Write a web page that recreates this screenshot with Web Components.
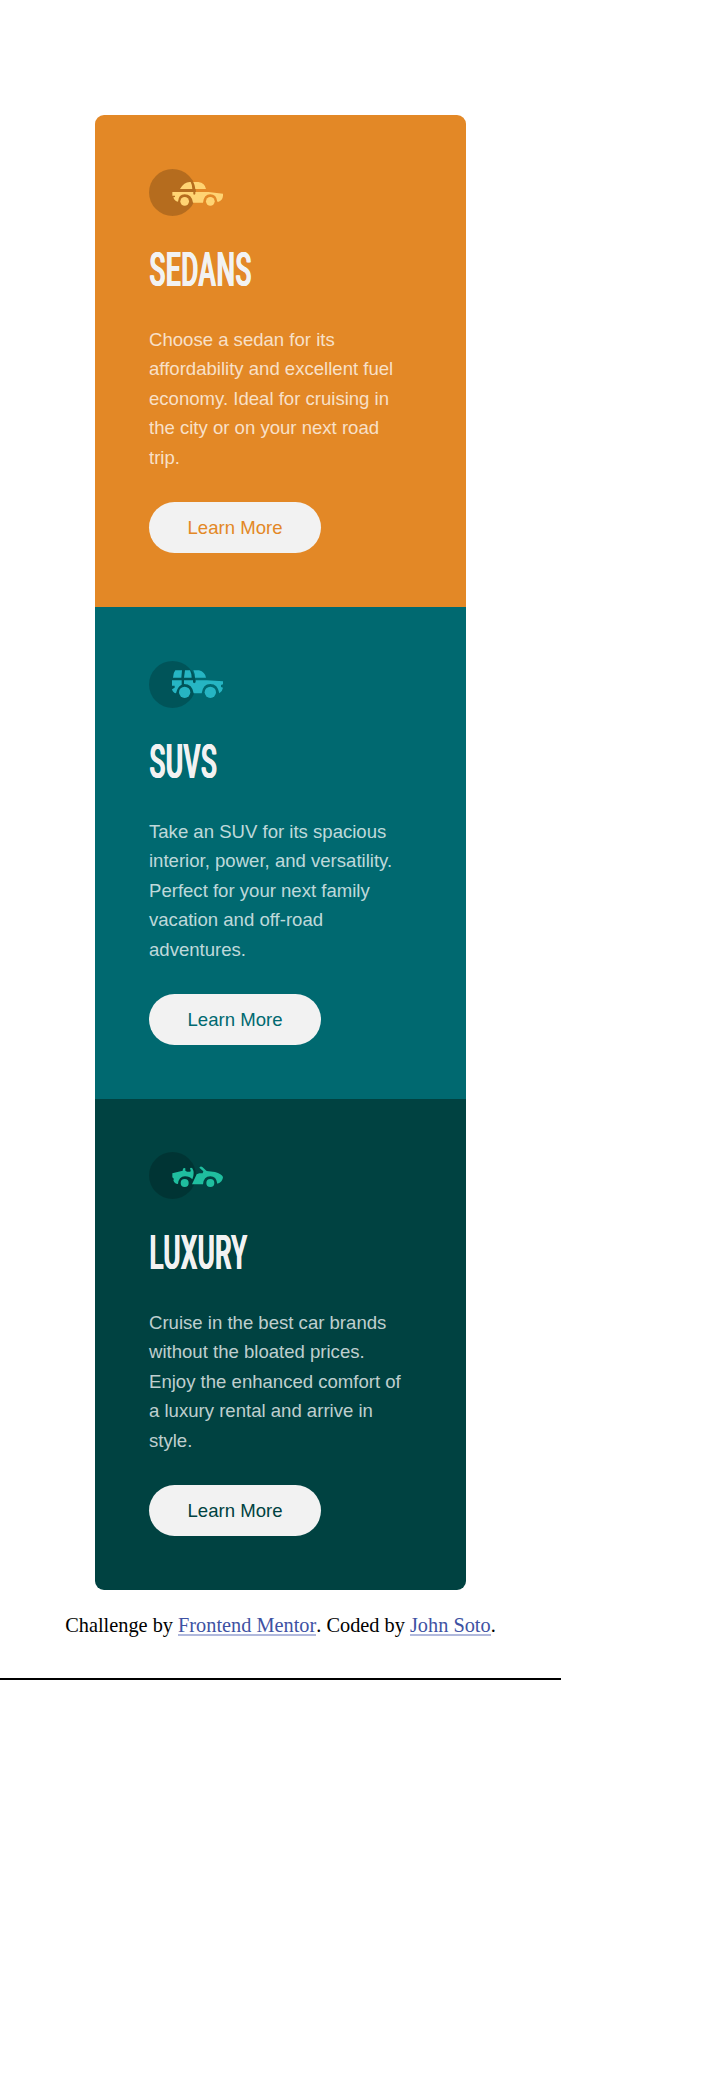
<!DOCTYPE html>
<html lang="en">
<head>
<meta charset="utf-8">
<title>3-column preview card</title>
<style>
html, body { margin: 0; background: #fff; }
</style>
</head>
<body>
<preview-page>
  <car-card kind="sedans">
    <span slot="title">SEDANS</span>
    Choose a sedan for its affordability and excellent fuel economy. Ideal for cruising in the city or on your next road trip.
  </car-card>
  <car-card kind="suvs">
    <span slot="title">SUVS</span>
    Take an SUV for its spacious interior, power, and versatility. Perfect for your next family vacation and off-road adventures.
  </car-card>
  <car-card kind="luxury">
    <span slot="title">LUXURY</span>
    Cruise in the best car brands without the bloated prices. Enjoy the enhanced comfort of a luxury rental and arrive in style.
  </car-card>
  <page-credit slot="footer"></page-credit>
</preview-page>
<script>
const icons = {
  sedans: `
    <path fill="#ffd473" d="M93 60Q105 39 122 39H125Q130 48 130 60ZM133 39H148Q168 42 171 60H139Q138 48 133 39ZM70 69H133V75Q135 80 139 75V69H178L222 74V80Q221 93 209 98H205Q202 76 184 76Q165 76 162 101H132Q128 76 107 76Q89 76 87 98Q76 97 73 85L78 84V80H70Z"/>
    <circle cx="107" cy="97" r="13" fill="#ffd473"/><circle cx="184" cy="97" r="13" fill="#ffd473"/>`,
  suvs: `
    <path fill="#26b5c3" d="M79 28H99L97 50H72Q72 36 79 28ZM108 28H123Q128 38 128 50H105ZM133 28H150Q168 33 171 50H138Q138 38 133 28ZM69 58H98V71Q85 77 81 97Q72 96 69 85L77 80V74H69ZM105 58H132V64Q135 69 140 64V58H174L222 61V70L216 72V78L222 80Q220 92 211 97Q206 69 184 69Q162 69 158 97H134Q130 69 105 69Z"/>
    <circle cx="107" cy="94" r="17" fill="#26b5c3"/><circle cx="184" cy="94" r="17" fill="#26b5c3"/>`,
  luxury: `
    <path fill="#1fbe9f" d="M70 64L101 56L102 50Q105 46 109 49V56Q116 61 124 59Q127 55 123 50Q125 45 130 49Q138 63 130 82Q122 73 108 73Q89 74 87 96Q76 96 73 84L75 81L70 76ZM151 47Q155 41 160 45L173 57L198 60Q218 66 222 75Q221 91 205 95Q202 73 184 73Q164 73 162 97H129L143 67L151 64H161L163 58Z"/>
    <circle cx="107" cy="93" r="12" fill="#1fbe9f"/><circle cx="184" cy="93" r="12" fill="#1fbe9f"/>`
};

customElements.define('car-icon', class extends HTMLElement {
  connectedCallback() {
    this.attachShadow({ mode: 'open' }).innerHTML = `
      <style>:host { display: block; height: 47px; } svg { display: block; }</style>
      <svg width="74" height="47" viewBox="0 0 222 141">
        <circle cx="70.5" cy="70.5" r="70.5" fill="#000" fill-opacity=".2"/>
        ${icons[this.getAttribute('kind')]}
      </svg>`;
  }
});

customElements.define('pill-button', class extends HTMLElement {
  connectedCallback() {
    this.attachShadow({ mode: 'open' }).innerHTML = `
      <style>
        :host { display: block; }
        button { display: block; box-sizing: border-box; width: 172px; height: 50.6px; margin: 0; padding: 1px 0 0; border: 0;
          border-radius: 26px; background: #f2f2f2; color: var(--tone);
          font: 18.57px "Liberation Sans", Arial, sans-serif; }
      </style>
      <button><slot></slot></button>`;
  }
});

customElements.define('car-card', class extends HTMLElement {
  connectedCallback() {
    const kind = this.getAttribute('kind');
    this.attachShadow({ mode: 'open' }).innerHTML = `
      <style>
        :host { display: block; box-sizing: border-box; height: 492px; padding: 54px; background: var(--tone); }
        :host([kind=sedans]) { --tone: #e38826; --squeeze: .55; }
        :host([kind=suvs]) { --tone: #006970; --squeeze: .55; }
        :host([kind=luxury]) { --tone: #004241; --squeeze: .543; --gap: 29.7px; height: 491px; padding-top: 53px; }
        h2 { margin: 26px 0 0; height: 82.7px; font: 500 47.5px/56px Roboto, sans-serif; color: #f2f2f2;
          letter-spacing: 1px; text-shadow: 1px 0 #f2f2f2, 2px 0 #f2f2f2;
          white-space: nowrap; width: max-content; transform: scaleX(var(--squeeze)); transform-origin: 0 0; }
        p { margin: 0 0 var(--gap, 29.4px); width: 264px; font: 18.57px/29.6px "Liberation Sans", Arial, sans-serif;
          color: hsla(0, 0%, 100%, .75); }
      </style>
      <car-icon kind="${kind}"></car-icon>
      <h2><slot name="title"></slot></h2>
      <p><slot></slot></p>
      <pill-button>Learn More</pill-button>`;
  }
});

customElements.define('page-credit', class extends HTMLElement {
  connectedCallback() {
    this.attachShadow({ mode: 'open' }).innerHTML = `
      <style>
        :host { display: block; text-align: center; color: #000; font: 20.32px/24px "Liberation Serif", "Times New Roman", serif; }
        a { color: hsl(228, 45%, 44%); text-decoration: none; border-bottom: 2px solid #b0b8dc; display: inline-block; line-height: 18px; }
      </style>
      Challenge by <a>Frontend Mentor</a>. Coded by <a>John Soto</a>.`;
  }
});

customElements.define('preview-page', class extends HTMLElement {
  connectedCallback() {
    this.attachShadow({ mode: 'open' }).innerHTML = `
      <style>
        :host { display: block; box-sizing: border-box; width: 561px; height: 1680px; padding-top: 115px; border-bottom: 2px solid #000; }
        main { width: 371px; margin: 0 auto; border-radius: 9px; overflow: hidden; }
        footer { margin-top: 23px; }
      </style>
      <main><slot></slot></main>
      <footer><slot name="footer"></slot></footer>`;
  }
});
</script>
</body>
</html>
